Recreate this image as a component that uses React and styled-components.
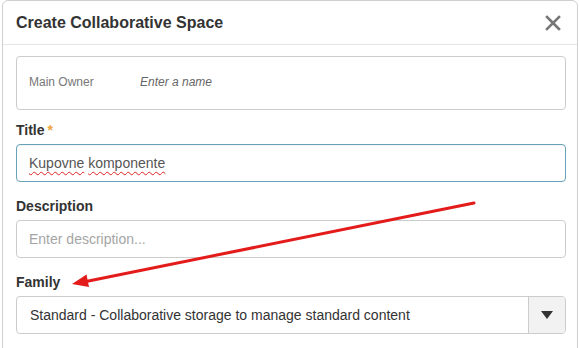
import React from 'react';
import styled, { createGlobalStyle } from 'styled-components';

const GlobalStyle = createGlobalStyle`
  html, body { margin: 0; padding: 0; }
  body {
    background: #fff;
    font-family: 'Liberation Sans', Arial, sans-serif;
    color: #333;
    width: 579px;
    height: 348px;
    overflow: hidden;
  }
`;

const Stage = styled.div`
  position: relative;
  width: 579px;
  height: 348px;
  padding-left: 2px;
  box-sizing: border-box;
`;

const Dialog = styled.div`
  width: 576px;
  height: 360px;
  box-sizing: border-box;
  border: 1px solid #cfcfcf;
  border-radius: 6px;
  background: #fff;
  display: flex;
  flex-direction: column;
`;

const Header = styled.div`
  height: 43px;
  border-bottom: 1px solid #e5e5e5;
  display: flex;
  align-items: center;
  justify-content: space-between;
  padding: 0 15px 0 13px;
`;

const Heading = styled.h4`
  margin: 0;
  font-size: 16px;
  font-weight: bold;
  color: #333;
`;

const Close = styled.button`
  border: none;
  background: none;
  padding: 0;
  width: 18px;
  height: 18px;
  display: flex;
  align-items: center;
  justify-content: center;
  cursor: pointer;
`;

const Body = styled.div`
  padding: 11px 11px 0 13px;
  display: flex;
  flex-direction: column;
`;

const OwnerBox = styled.div`
  height: 54px;
  box-sizing: border-box;
  border: 1px solid #ccc;
  border-radius: 4px;
  display: flex;
  align-items: center;
  padding: 0 12px 2px;
  font-size: 12px;
`;

const OwnerLabel = styled.span`
  width: 111px;
  color: #777;
`;

const OwnerInput = styled.span`
  font-style: italic;
  color: #666;
`;

const Label = styled.label`
  display: block;
  margin-top: ${p => (p.$first ? '10px' : '14px')};
  margin-bottom: 4px;
  line-height: 20px;
  font-size: 14px;
  font-weight: bold;
  color: #333;
`;

const Required = styled.span`
  color: #f0a43c;
  margin-left: 3px;
`;

const Field = styled.div`
  height: 38px;
  box-sizing: border-box;
  border: 1px solid ${p => (p.$focused ? '#66a3b8' : '#ccc')};
  border-radius: 4px;
  display: flex;
  align-items: center;
  padding: 0 12px;
  font-size: 14px;
  color: ${p => (p.$placeholder ? '#a5a5a5' : '#555')};
  box-shadow: ${p => (p.$focused ? 'inset 0 1px 1px rgba(0,0,0,.05)' : 'none')};
`;

const Misspelled = styled.span`
  text-decoration: underline wavy #d22;
  text-decoration-thickness: 1px;
  text-underline-offset: 3px;
`;

const Select = styled.div`
  height: 38px;
  box-sizing: border-box;
  border: 1px solid #ccc;
  border-radius: 4px;
  display: flex;
  align-items: stretch;
  font-size: 14px;
  color: #333;
`;

const SelectText = styled.div`
  flex: 1;
  display: flex;
  align-items: center;
  padding: 0 13px;
`;

const Caret = styled.div`
  width: 36px;
  background: #f2f2f2;
  border-left: 1px solid #ccc;
  border-radius: 0 3px 3px 0;
  display: flex;
  align-items: center;
  justify-content: center;
`;

const Annotation = styled.svg`
  position: absolute;
  left: 0;
  top: 0;
  pointer-events: none;
`;

export default function App() {
  return (
    <>
      <GlobalStyle />
      <Stage>
        <Dialog>
          <Header>
            <Heading>Create Collaborative Space</Heading>
            <Close aria-label="Close">
              <svg width="16" height="16" viewBox="0 0 16 16">
                <path d="M2 2 L14 14 M14 2 L2 14" stroke="#777" strokeWidth="2.6" strokeLinecap="square" />
              </svg>
            </Close>
          </Header>
          <Body>
            <OwnerBox>
              <OwnerLabel>Main Owner</OwnerLabel>
              <OwnerInput>Enter a name</OwnerInput>
            </OwnerBox>

            <Label $first>Title<Required>*</Required></Label>
            <Field $focused>
              <Misspelled>Kupovne</Misspelled>&nbsp;<Misspelled>komponente</Misspelled>
            </Field>

            <Label>Description</Label>
            <Field $placeholder>Enter description...</Field>

            <Label>Family</Label>
            <Select>
              <SelectText>Standard - Collaborative storage to manage standard content</SelectText>
              <Caret>
                <svg width="12" height="8" viewBox="0 0 12 8">
                  <path d="M0 0 L12 0 L6 8 Z" fill="#333" />
                </svg>
              </Caret>
            </Select>
          </Body>
        </Dialog>
        <Annotation width="579" height="348" viewBox="0 0 579 348">
          <line x1="474" y1="203" x2="86" y2="281.5" stroke="#e31b1b" strokeWidth="3" strokeLinecap="round" />
          <polygon points="72,284 89,287 86.5,274.5" fill="#e31b1b" />
        </Annotation>
      </Stage>
    </>
  );
}
